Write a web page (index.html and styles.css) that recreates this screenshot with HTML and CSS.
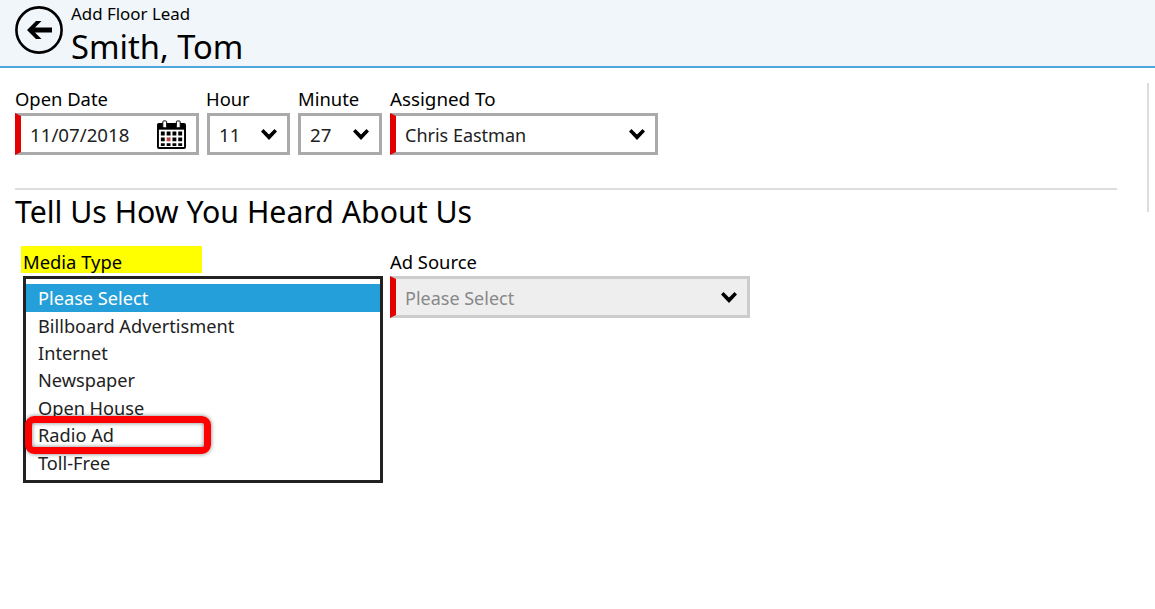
FILE: index.html
```html
<!DOCTYPE html>
<html lang="en">
<head>
<meta charset="utf-8">
<title>Add Floor Lead</title>
<link rel="stylesheet" href="styles.css">
</head>
<body>
<header class="page-header">
  <svg class="back-icon" width="48" height="48" viewBox="0 0 48 48" aria-label="Back">
    <circle cx="24" cy="24" r="22.6" fill="none" stroke="#000" stroke-width="2.6"/>
    <path d="M37 21.500h-17l6.500-6.500h-5.500l-9 9 9 9h5.500l-6.500-6.500h17z" fill="#000"/>
  </svg>
  <div class="titles">
    <div class="subtitle">Add Floor Lead</div>
    <div class="title">Smith, Tom</div>
  </div>
</header>
<main class="content">
  <div class="row">
    <div class="field w-date">
      <label class="label">Open Date</label>
      <div class="control required">
        <span class="value value-date">11/07/2018</span>
        <svg class="calendar" width="29" height="29" viewBox="0 0 30 30">
          <rect x="1" y="4" width="28" height="25" rx="1" fill="#fff" stroke="#000" stroke-width="2"/>
          <rect x="1" y="4" width="28" height="6" fill="#000"/>
          <rect x="6" y="1" width="4" height="7" rx="1" fill="#fff" stroke="#000"/>
          <rect x="20" y="1" width="4" height="7" rx="1" fill="#fff" stroke="#000"/>
          <path d="M4 12h4v4h-4zM10 12h4v4h-4zM16 12h4v4h-4zM22 12h4v4h-4zM4 18h4v4h-4zM16 18h4v4h-4zM22 18h4v4h-4zM4 24h4v3h-4zM10 24h4v3h-4zM16 24h4v3h-4zM22 24h4v3h-4z" fill="#000"/>
          <path d="M10 18h4v4h-4z" fill="#b44"/>
        </svg>
      </div>
    </div>
    <div class="field w-hour">
      <label class="label label-tight">Hour</label>
      <div class="control">
        <span class="value value-date">11</span>
        <svg class="chevron" width="16" height="11" viewBox="0 0 16 11"><path d="M0 2.500l2.500-2.500 5.500 5.500 5.500-5.500 2.500 2.500-8 8.500z" fill="#000"/></svg>
      </div>
    </div>
    <div class="field w-minute">
      <label class="label">Minute</label>
      <div class="control">
        <span class="value value-date">27</span>
        <svg class="chevron" width="16" height="11" viewBox="0 0 16 11"><path d="M0 2.500l2.500-2.500 5.500 5.500 5.500-5.500 2.500 2.500-8 8.500z" fill="#000"/></svg>
      </div>
    </div>
    <div class="field w-assigned">
      <label class="label label-wide">Assigned To</label>
      <div class="control required">
        <span class="value">Chris Eastman</span>
        <svg class="chevron" width="16" height="11" viewBox="0 0 16 11"><path d="M0 2.500l2.500-2.500 5.500 5.500 5.500-5.500 2.500 2.500-8 8.500z" fill="#000"/></svg>
      </div>
    </div>
  </div>
  <hr class="divider">
  <h2 class="section-title">Tell Us How You Heard About Us</h2>
  <div class="row row-media">
    <div class="field w-media">
      <label class="label label-highlight">Media Type</label>
      <div class="listbox">
        <div class="option selected">Please Select</div>
        <div class="option">Billboard Advertisment</div>
        <div class="option">Internet</div>
        <div class="option">Newspaper</div>
        <div class="option">Open House</div>
        <div class="option">Radio Ad<span class="callout"></span></div>
        <div class="option">Toll-Free</div>
      </div>
    </div>
    <div class="field w-source">
      <label class="label">Ad Source</label>
      <div class="control required disabled">
        <span class="value">Please Select</span>
        <svg class="chevron" width="16" height="11" viewBox="0 0 16 11"><path d="M0 2.500l2.500-2.500 5.500 5.500 5.500-5.500 2.500 2.500-8 8.500z" fill="#000"/></svg>
      </div>
    </div>
  </div>
</main>
<div class="scroll-thumb"></div>
</body>
</html>
```
FILE: styles.css
```css
* { box-sizing: border-box; }
html, body { margin: 0; height: 100%; overflow: hidden; }
body {
  background: #fff;
  color: #000;
  font-family: "Noto Sans", "Open Sans", "Liberation Sans", sans-serif;
  position: relative;
}
.page-header {
  height: 68px;
  background: #f0f6fa;
  border-bottom: 2px solid #4fa6dc;
  display: flex;
  align-items: flex-start;
  padding: 6px 0 0 15px;
  gap: 8px;
}
.back-icon { flex: none; }
.titles { margin-top: -1px; }
.subtitle { font-size: 16.900px; line-height: 18px; }
.title { font-size: 32.700px; line-height: 38px; margin-top: 5px; }
.content { padding: 0 38px 0 15px; }
.row { display: flex; gap: 8px; padding-top: 19px; }
.field { flex: none; }
.w-date { width: 184px; }
.w-hour { width: 83px; }
.w-minute { width: 84px; }
.w-assigned { width: 268px; }
.w-media { width: 360px; margin-left: 8px; margin-right: -1px; }
.w-source { width: 360px; }
.label { display: block; font-size: 18.400px; line-height: 24px; margin-bottom: 2px; white-space: nowrap; }
.label-tight { margin-left: -1px; }
.label-wide { font-size: 18.800px; }
.control {
  height: 42px;
  border: 3px solid #aaa;
  display: flex;
  align-items: center;
  justify-content: space-between;
  padding: 1px 10px 0 9px;
  background: #fff;
}
.control.required { border-left: 6px solid #e30000; padding-left: 9px; }
.value { font-size: 18px; color: #222; white-space: nowrap; }
.value-date { font-size: 18.700px; }
.chevron { margin-top: -1px; }
.disabled { background: #eee; border-color: #ccc #ccc #ccc #e30000; }
.disabled .value { color: #888; }
.calendar { margin-top: -1px; }
.w-date .control { padding-right: 10px; }
.divider { border: 0; height: 2px; background: #ddd; margin: 33px 0 0; }
.section-title { margin: 0; font-size: 30.250px; font-weight: 400; line-height: 44px; }
.row-media { padding-top: 12px; }
.w-media .label-highlight { width: 181px; height: 27px; margin-left: -2px; margin-bottom: 3px; padding-left: 2px; padding-top: 3px; line-height: 25px; background: #ff0; }
.w-source .label { margin-bottom: 3px; height: 27px; padding-top: 3px; line-height: 25px; }
.listbox { height: 207px; border: 3px solid #222; padding-top: 5.100px; }
.option { position: relative; height: 27.450px; line-height: 28px; font-size: 18.200px; padding-left: 12px; color: #222; white-space: nowrap; }
.option.selected { background: #259fd9; color: #fff; }
.callout {
  position: absolute;
  left: -1px;
  top: -5px;
  width: 186px;
  height: 38px;
  border: 7px solid #f00;
  border-radius: 9px;
  box-shadow: 0 0 4px rgba(0,0,0,.5), inset 0 0 4px rgba(0,0,0,.5);
}
.scroll-thumb { position: absolute; left: 1147px; top: 83px; width: 2px; height: 129px; background: #ddd; }
```
